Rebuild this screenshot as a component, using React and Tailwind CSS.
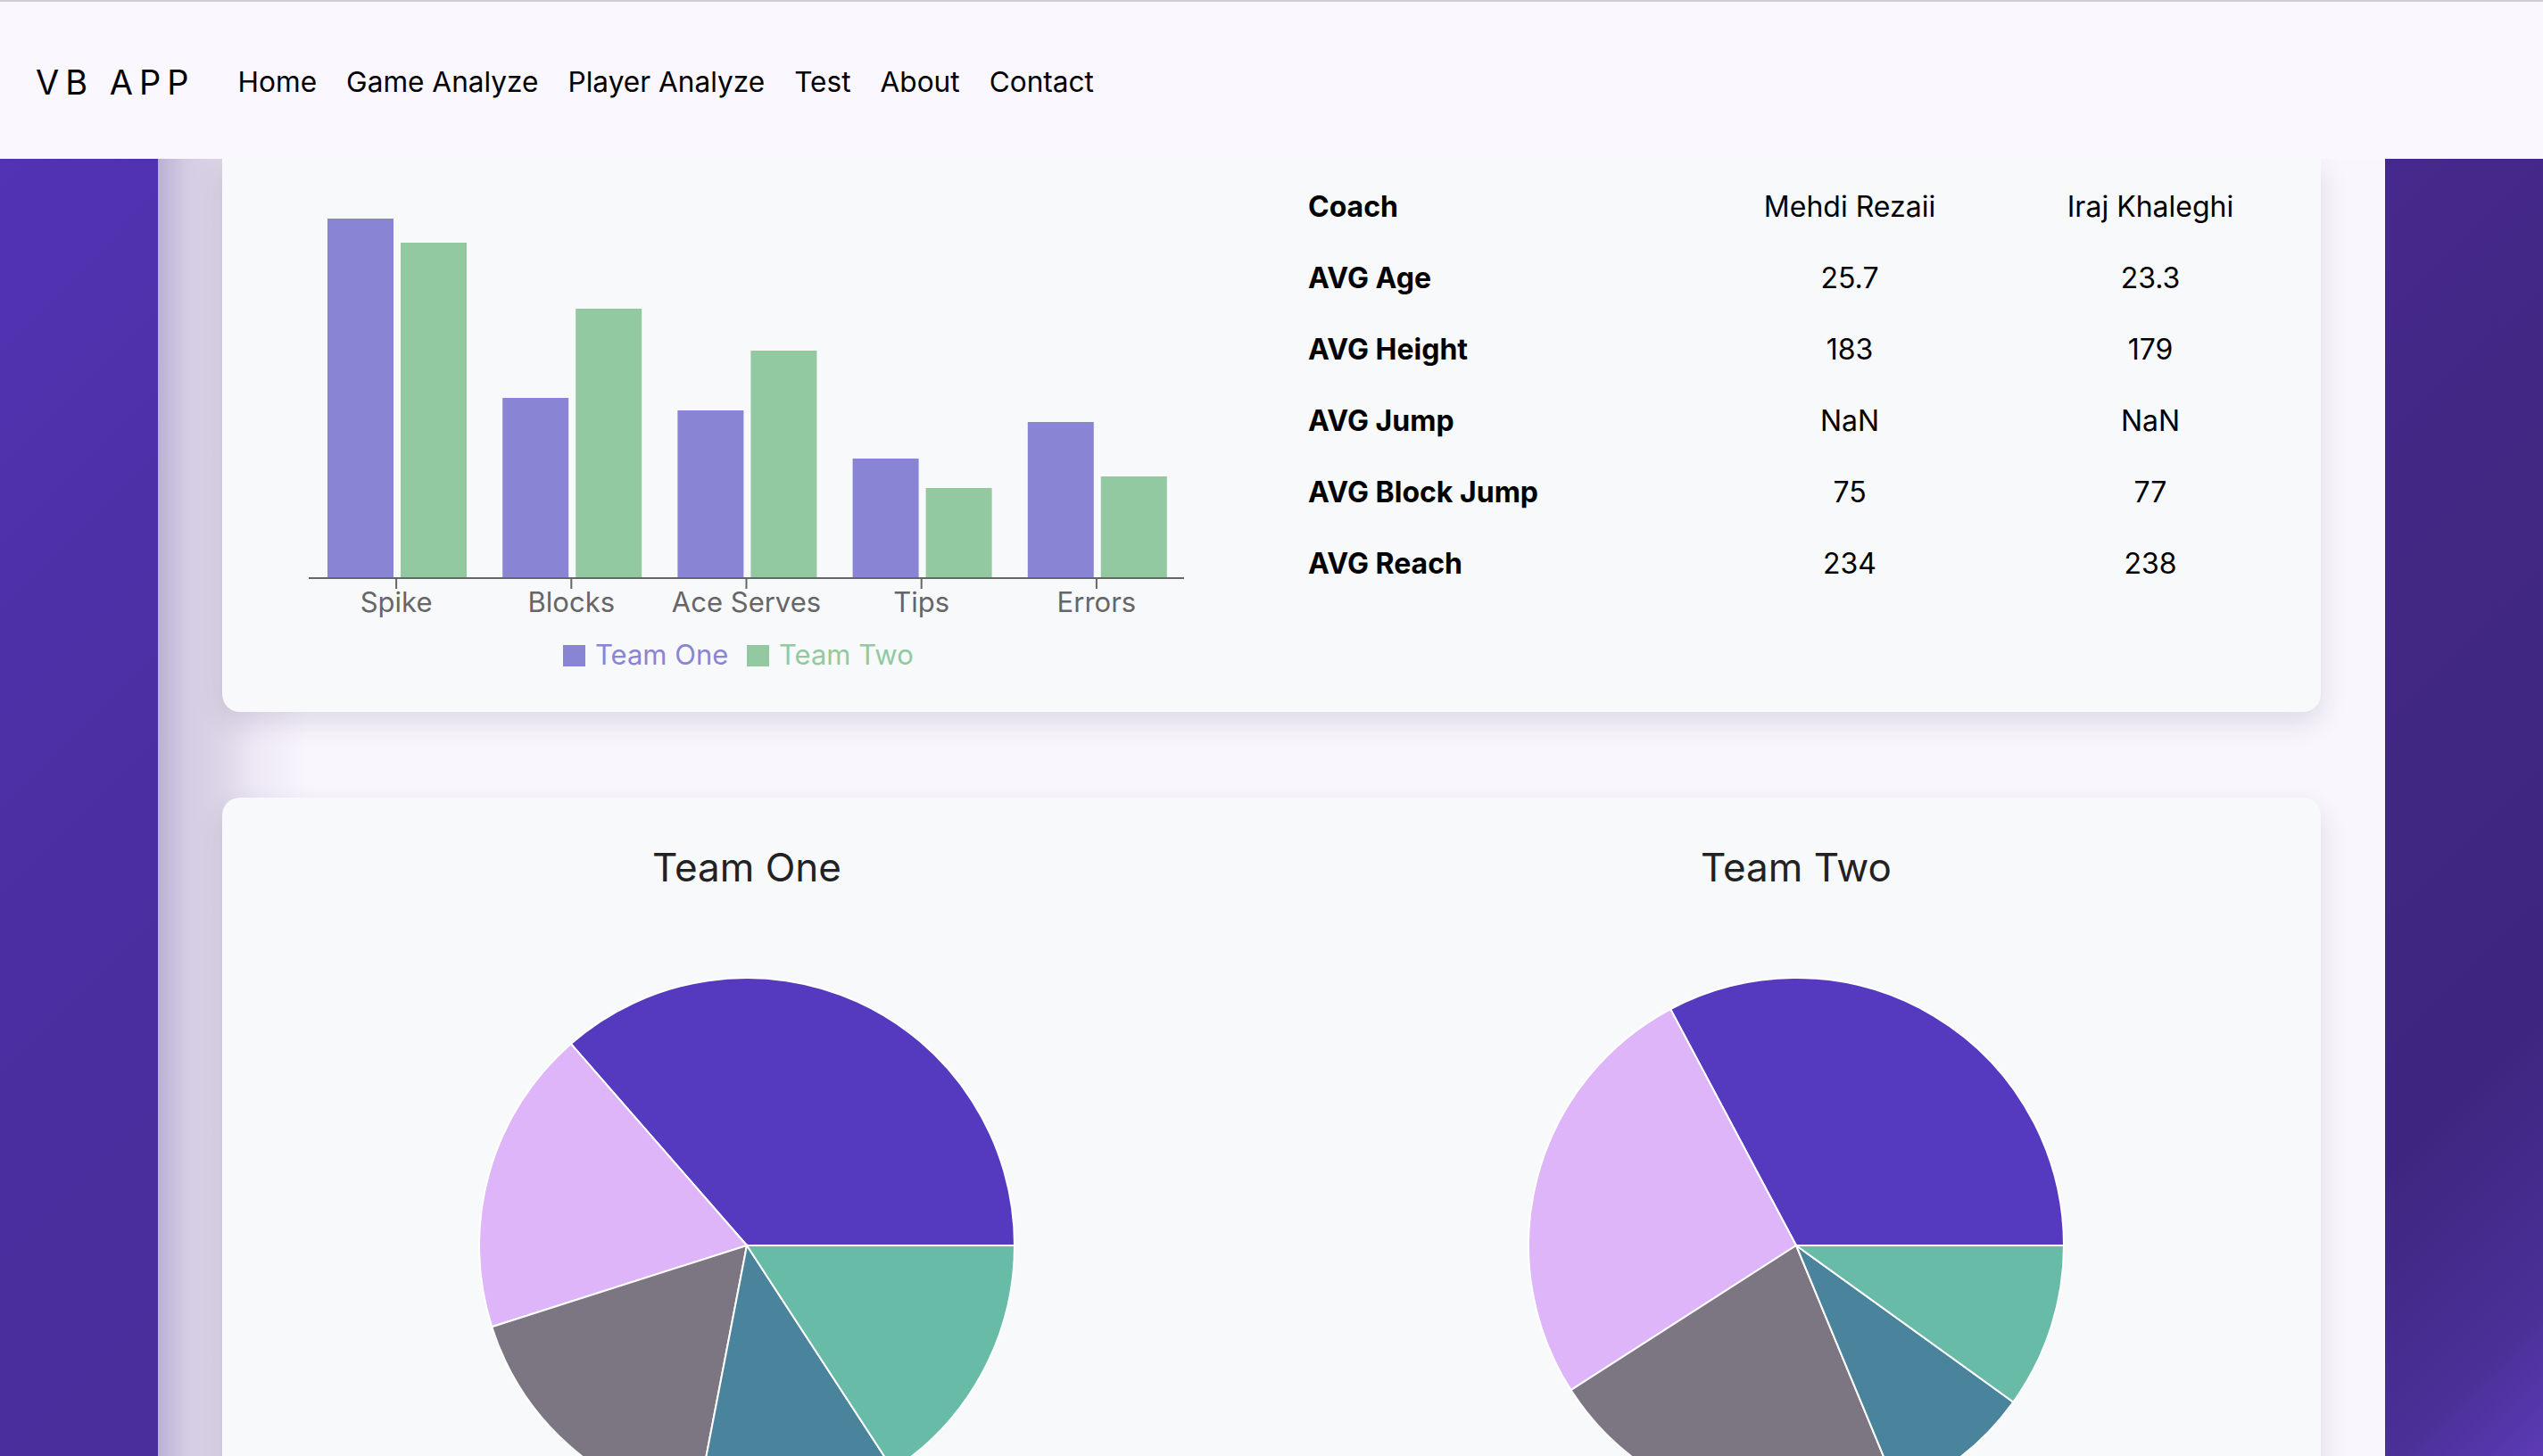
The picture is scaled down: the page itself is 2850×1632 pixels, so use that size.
import React from 'react';

const navLinks = ['Home', 'Game Analyze', 'Player Analyze', 'Test', 'About', 'Contact'];

const stats = [
  { label: 'Spike', one: 67, two: 94 },
  { label: 'Blocks', one: 268, two: 168 },
  { label: 'Ace Serves', one: 282, two: 215 },
  { label: 'Tips', one: 336, two: 369 },
  { label: 'Errors', one: 295, two: 356 },
];

const rows = [
  ['Coach', 'Mehdi Rezaii', 'Iraj Khaleghi'],
  ['AVG Age', '25.7', '23.3'],
  ['AVG Height', '183', '179'],
  ['AVG Jump', 'NaN', 'NaN'],
  ['AVG Block Jump', '75', '77'],
  ['AVG Reach', '234', '238'],
];

const sliceColors = ['#5539bf', '#dfb5f9', '#7c7683', '#4a839c', '#68bba7'];

const pies = [
  { title: 'Team One', cuts: [0, 131.1, 197.7, 259.1, 303.1, 360] },
  { title: 'Team Two', cuts: [0, 118, 212.7, 292.5, 324.2, 360] },
];

const AXIS_Y = 470;
const BAND = 196.2;
const START = 97;

function BarChart() {
  return (
    <svg width="1176" height="620" viewBox="0 0 1176 620" className="block">
      {stats.map((s, i) => {
        const x = START + BAND * i;
        const mid = x + BAND / 2;
        return (
          <g key={s.label}>
            <rect x={x + 21} y={s.one} width="74" height={AXIS_Y - s.one} fill="#8985d4" />
            <rect x={x + 103} y={s.two} width="74" height={AXIS_Y - s.two} fill="#93c9a0" />
            <line x1={mid} y1={AXIS_Y} x2={mid} y2={AXIS_Y + 12} stroke="#666" strokeWidth="2" />
            <text x={mid} y="508" textAnchor="middle" fill="#666" fontSize="31" fontFamily="Inter, sans-serif">
              {s.label}
            </text>
          </g>
        );
      })}
      <line x1={START} y1={AXIS_Y} x2={START + BAND * 5} y2={AXIS_Y} stroke="#666" strokeWidth="2" />
      {/* legend */}
      <rect x="382" y="545" width="25" height="24" fill="#8985d4" />
      <text x="418" y="567" fill="#8985d4" fontSize="31" fontFamily="Inter, sans-serif">Team One</text>
      <rect x="588" y="545" width="25" height="24" fill="#93c9a0" />
      <text x="624" y="567" fill="#93c9a0" fontSize="31" fontFamily="Inter, sans-serif">Team Two</text>
    </svg>
  );
}

function slicePath(cx, cy, r, a0, a1) {
  const rad = (d) => (d * Math.PI) / 180;
  const x0 = cx + r * Math.cos(rad(a0));
  const y0 = cy - r * Math.sin(rad(a0));
  const x1 = cx + r * Math.cos(rad(a1));
  const y1 = cy - r * Math.sin(rad(a1));
  const large = a1 - a0 > 180 ? 1 : 0;
  return `M ${cx} ${cy} L ${x0} ${y0} A ${r} ${r} 0 ${large} 0 ${x1} ${y1} Z`;
}

function Pie({ cuts }) {
  return (
    <svg width="620" height="620" viewBox="0 0 620 620" className="block">
      {sliceColors.map((c, i) => (
        <path key={c} d={slicePath(310, 310, 300, cuts[i], cuts[i + 1])} fill={c} stroke="#fff" strokeWidth="2" />
      ))}
    </svg>
  );
}

export default function App() {
  return (
    <div className="h-[1632px] overflow-hidden flex flex-col font-['Inter','Liberation_Sans',sans-serif] bg-[linear-gradient(135deg,#5333b4_0%,#5132b0_8%,#4b2fa3_21%,#4a2e9c_38%,#45288a_66%,#40277f_80%,#3e2680_89%,#4a2f96_96%,#5c3bb6_100%)]">
      {/* Navbar */}
      <nav className="relative z-10 h-[178px] shrink-0 border-t-2 border-[#d0ccd4] bg-[#faf7fe] flex items-center pl-[40px] pt-[3px] text-black">
        <span className="text-[38px] tracking-[7px] leading-none">VB APP</span>
        <div className="ml-[48px] flex items-center gap-[33px] text-[31.6px] leading-none">
          {navLinks.map((l) => (
            <a key={l} href="#" className="text-black">{l}</a>
          ))}
        </div>
      </nav>

      <main className="mx-[177px] flex-1 px-[72px] flex flex-col gap-[96px] bg-[linear-gradient(to_right,#bcb0d5_0px,#d3cce3_32px,#dcd6e7_72px,#eee9f6_110px,#f9f6fd_170px)]">
        {/* Stats card */}
        <section className="h-[620px] shrink-0 rounded-b-[20px] bg-[#f8f9fa] shadow-[0_12px_30px_rgba(60,40,90,0.14)] grid grid-cols-2">
          <div>
            <BarChart />
          </div>
          <div className="pl-[41px] pt-[14px]">
            <div className="grid grid-cols-[420px_374px_300px] text-[32px] text-black">
              {rows.map(([label, a, b]) => (
                <React.Fragment key={label}>
                  <div className="h-[80px] flex items-center font-bold">{label}</div>
                  <div className="h-[80px] flex items-center justify-center">{a}</div>
                  <div className="h-[80px] flex items-center justify-center">{b}</div>
                </React.Fragment>
              ))}
            </div>
          </div>
        </section>

        {/* Pie card */}
        <section className="h-[900px] shrink-0 rounded-[20px] bg-[#f8f9fa] shadow-[0_12px_30px_rgba(60,40,90,0.14)] grid grid-cols-2">
          {pies.map((p) => (
            <div key={p.title} className="flex flex-col items-center pt-[50px]">
              <h3 className="text-[44px] leading-[56px] text-[#222]">{p.title}</h3>
              <div className="mt-[86px]">
                <Pie cuts={p.cuts} />
              </div>
            </div>
          ))}
        </section>
      </main>
    </div>
  );
}
